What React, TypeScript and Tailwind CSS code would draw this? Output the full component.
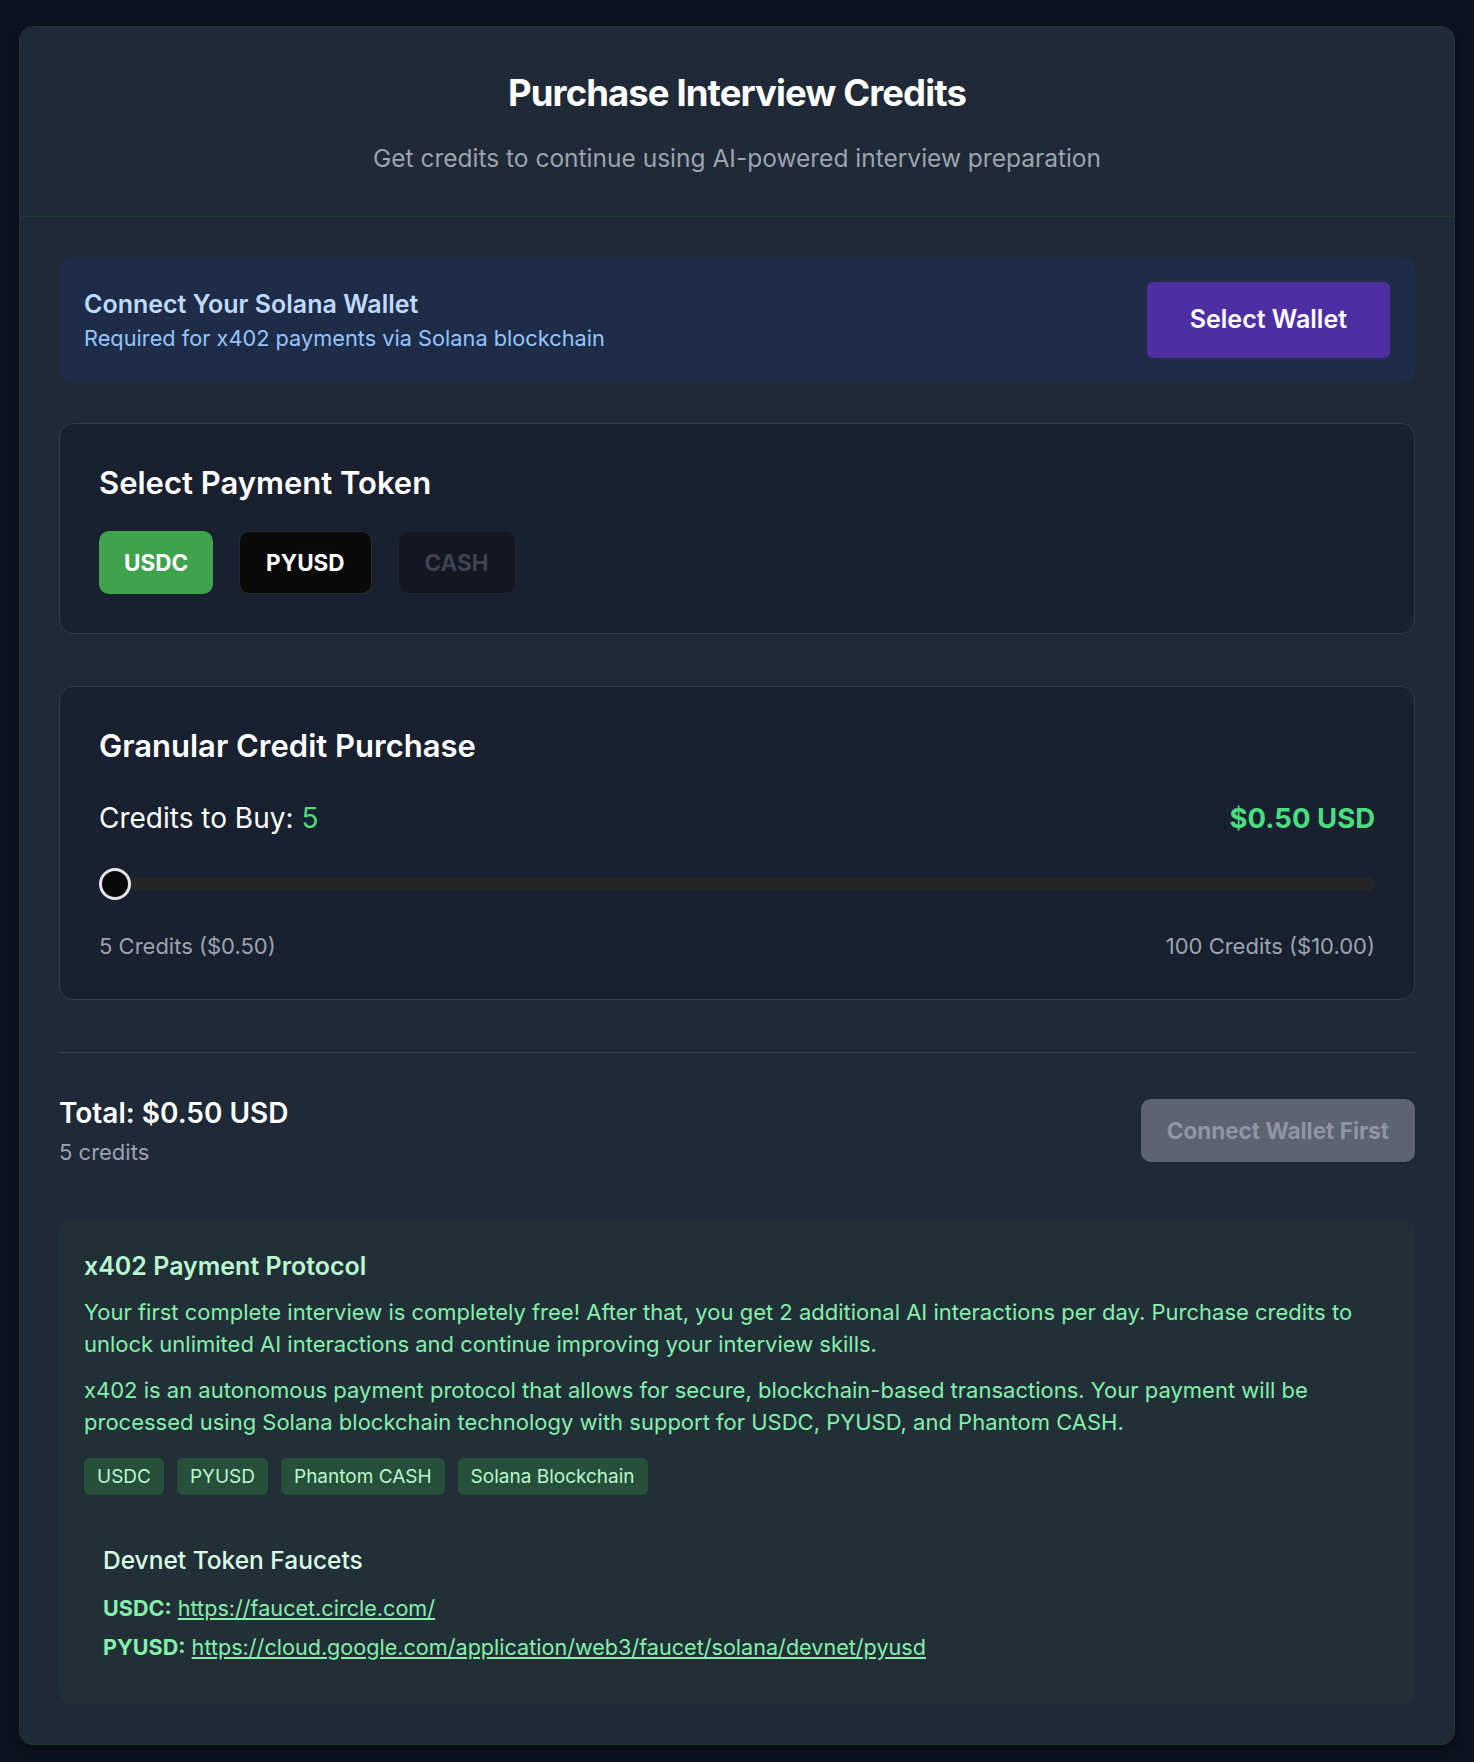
import React from "react";

export default function App() {
  return (
    <div className="min-h-screen bg-[#0c121f] px-[19px] pt-[26px] pb-[17px] font-['Inter',sans-serif]">
      <div className="rounded-[14px] border border-[#22362f] bg-[#1f2937] shadow-[0_4px_12px_rgba(0,0,0,0.35)]">
        {/* Header */}
        <div className="border-b border-[#1f3b30] px-[39px] pt-[44px] pb-[40px] text-center">
          <h1 className="text-[36.5px] leading-[45px] font-bold tracking-[-0.025em] text-white">
            Purchase Interview Credits
          </h1>
          <p className="mt-[25px] text-[24.5px] leading-[35px] text-[#9ca3af]">
            Get credits to continue using AI-powered interview preparation
          </p>
        </div>

        {/* Body */}
        <div className="px-[39px] pt-[40px] pb-[40px]">
          {/* Wallet */}
          <div className="flex items-center justify-between rounded-[12px] bg-[#1f2c48] p-[25px]">
            <div>
              <div className="text-[25px] leading-[30px] font-semibold text-[#bfdbfe]">
                Connect Your Solana Wallet
              </div>
              <div className="mt-[5px] text-[21.75px] leading-[28px] text-[#93c5fd]">
                Required for x402 payments via Solana blockchain
              </div>
            </div>
            <button className="h-[76px] rounded-[6px] bg-[#4e2fa3] px-[43px] text-[25px] font-semibold text-white">
              Select Wallet
            </button>
          </div>

          {/* Token */}
          <div className="mt-[40px] rounded-[14px] border border-[#323b4a] bg-[#19202f] p-[39px]">
            <h2 className="text-[31px] leading-[40px] font-semibold text-white">Select Payment Token</h2>
            <div className="mt-[28px] flex gap-[26px]">
              <button className="h-[63px] rounded-[10px] bg-[#3fa34d] px-[25px] text-[22.5px] font-bold text-white">
                USDC
              </button>
              <button className="h-[63px] rounded-[10px] border border-[#2a2a2a] bg-[#0a0a0a] px-[26px] text-[22.5px] font-bold text-white">
                PYUSD
              </button>
              <button className="h-[63px] rounded-[10px] border border-[#222632] bg-[#141720] px-[26px] text-[22.5px] font-bold text-[#3d4352]">
                CASH
              </button>
            </div>
          </div>

          {/* Granular */}
          <div className="mt-[52px] rounded-[14px] border border-[#323b4a] bg-[#19202f] p-[39px]">
            <h2 className="text-[31px] leading-[40px] font-semibold text-white">Granular Credit Purchase</h2>
            <div className="mt-[35px] flex items-center justify-between">
              <div className="text-[28px] leading-[35px] text-white">
                Credits to Buy: <span className="text-[#4ade80]">5</span>
              </div>
              <div className="text-[27.5px] leading-[35px] font-bold text-[#4ade80]">$0.50 USD</div>
            </div>
            <div className="relative mt-[32px] flex h-[32px] items-center">
              <div className="h-[12px] w-full rounded-full bg-[#262626]" />
              <div className="absolute left-0 top-0 h-[32px] w-[32px] rounded-full border-[3px] border-[#e5e5e5] bg-[#0a0a0a]" />
            </div>
            <div className="mt-[32px] flex justify-between text-[22px] leading-[28px] text-[#9ca3af]">
              <span>5 Credits ($0.50)</span>
              <span>100 Credits ($10.00)</span>
            </div>
          </div>

          <div className="mt-[52px] border-t border-[#374151]" />

          {/* Total */}
          <div className="mt-[42px] flex items-center justify-between">
            <div>
              <div className="text-[28px] leading-[36px] font-semibold text-white">Total: $0.50 USD</div>
              <div className="mt-[7px] text-[22px] leading-[28px] text-[#9ca3af]">5 credits</div>
            </div>
            <button className="h-[63px] rounded-[10px] bg-[#5d6373] px-[26px] text-[22.5px] font-bold text-[#8f95a3]">
              Connect Wallet First
            </button>
          </div>

          {/* x402 info */}
          <div className="mt-[54px] rounded-[12px] bg-[#213037] px-[25px] pt-[29px] pb-[25px]">
            <h3 className="text-[25px] leading-[35px] font-semibold text-[#bbf7d0]">x402 Payment Protocol</h3>
            <p className="mt-[12px] text-[22px] leading-[32px] text-[#86efac]">
              Your first complete interview is completely free! After that, you get 2 additional AI interactions per
              day. Purchase credits to unlock unlimited AI interactions and continue improving your interview skills.
            </p>
            <p className="mt-[14px] text-[22px] leading-[32px] text-[#86efac]">
              x402 is an autonomous payment protocol that allows for secure, blockchain-based transactions. Your payment
              will be processed using Solana blockchain technology with support for USDC, PYUSD, and Phantom CASH.
            </p>
            <div className="mt-[20px] flex flex-wrap gap-[13px]">
              {["USDC", "PYUSD", "Phantom CASH", "Solana Blockchain"].map((b) => (
                <span
                  key={b}
                  className="rounded-[6px] bg-[#265039] px-[13px] py-[6px] text-[19px] leading-[25px] text-[#bbf7d0]"
                >
                  {b}
                </span>
              ))}
            </div>
            <div className="mt-[29px] p-[19px] pb-[18px]">
              <h4 className="text-[24.5px] leading-[35px] font-medium text-[#dcfce7]">Devnet Token Faucets</h4>
              <div className="mt-[16px] text-[21.6px] leading-[28px] text-[#86efac]">
                <span className="font-bold">USDC:</span>{" "}
                <a href="#" className="underline">
                  https://faucet.circle.com/
                </a>
              </div>
              <div className="mt-[11px] text-[21.6px] leading-[28px] text-[#86efac]">
                <span className="font-bold">PYUSD:</span>{" "}
                <a href="#" className="underline">
                  https://cloud.google.com/application/web3/faucet/solana/devnet/pyusd
                </a>
              </div>
            </div>
          </div>
        </div>
      </div>
    </div>
  );
}
